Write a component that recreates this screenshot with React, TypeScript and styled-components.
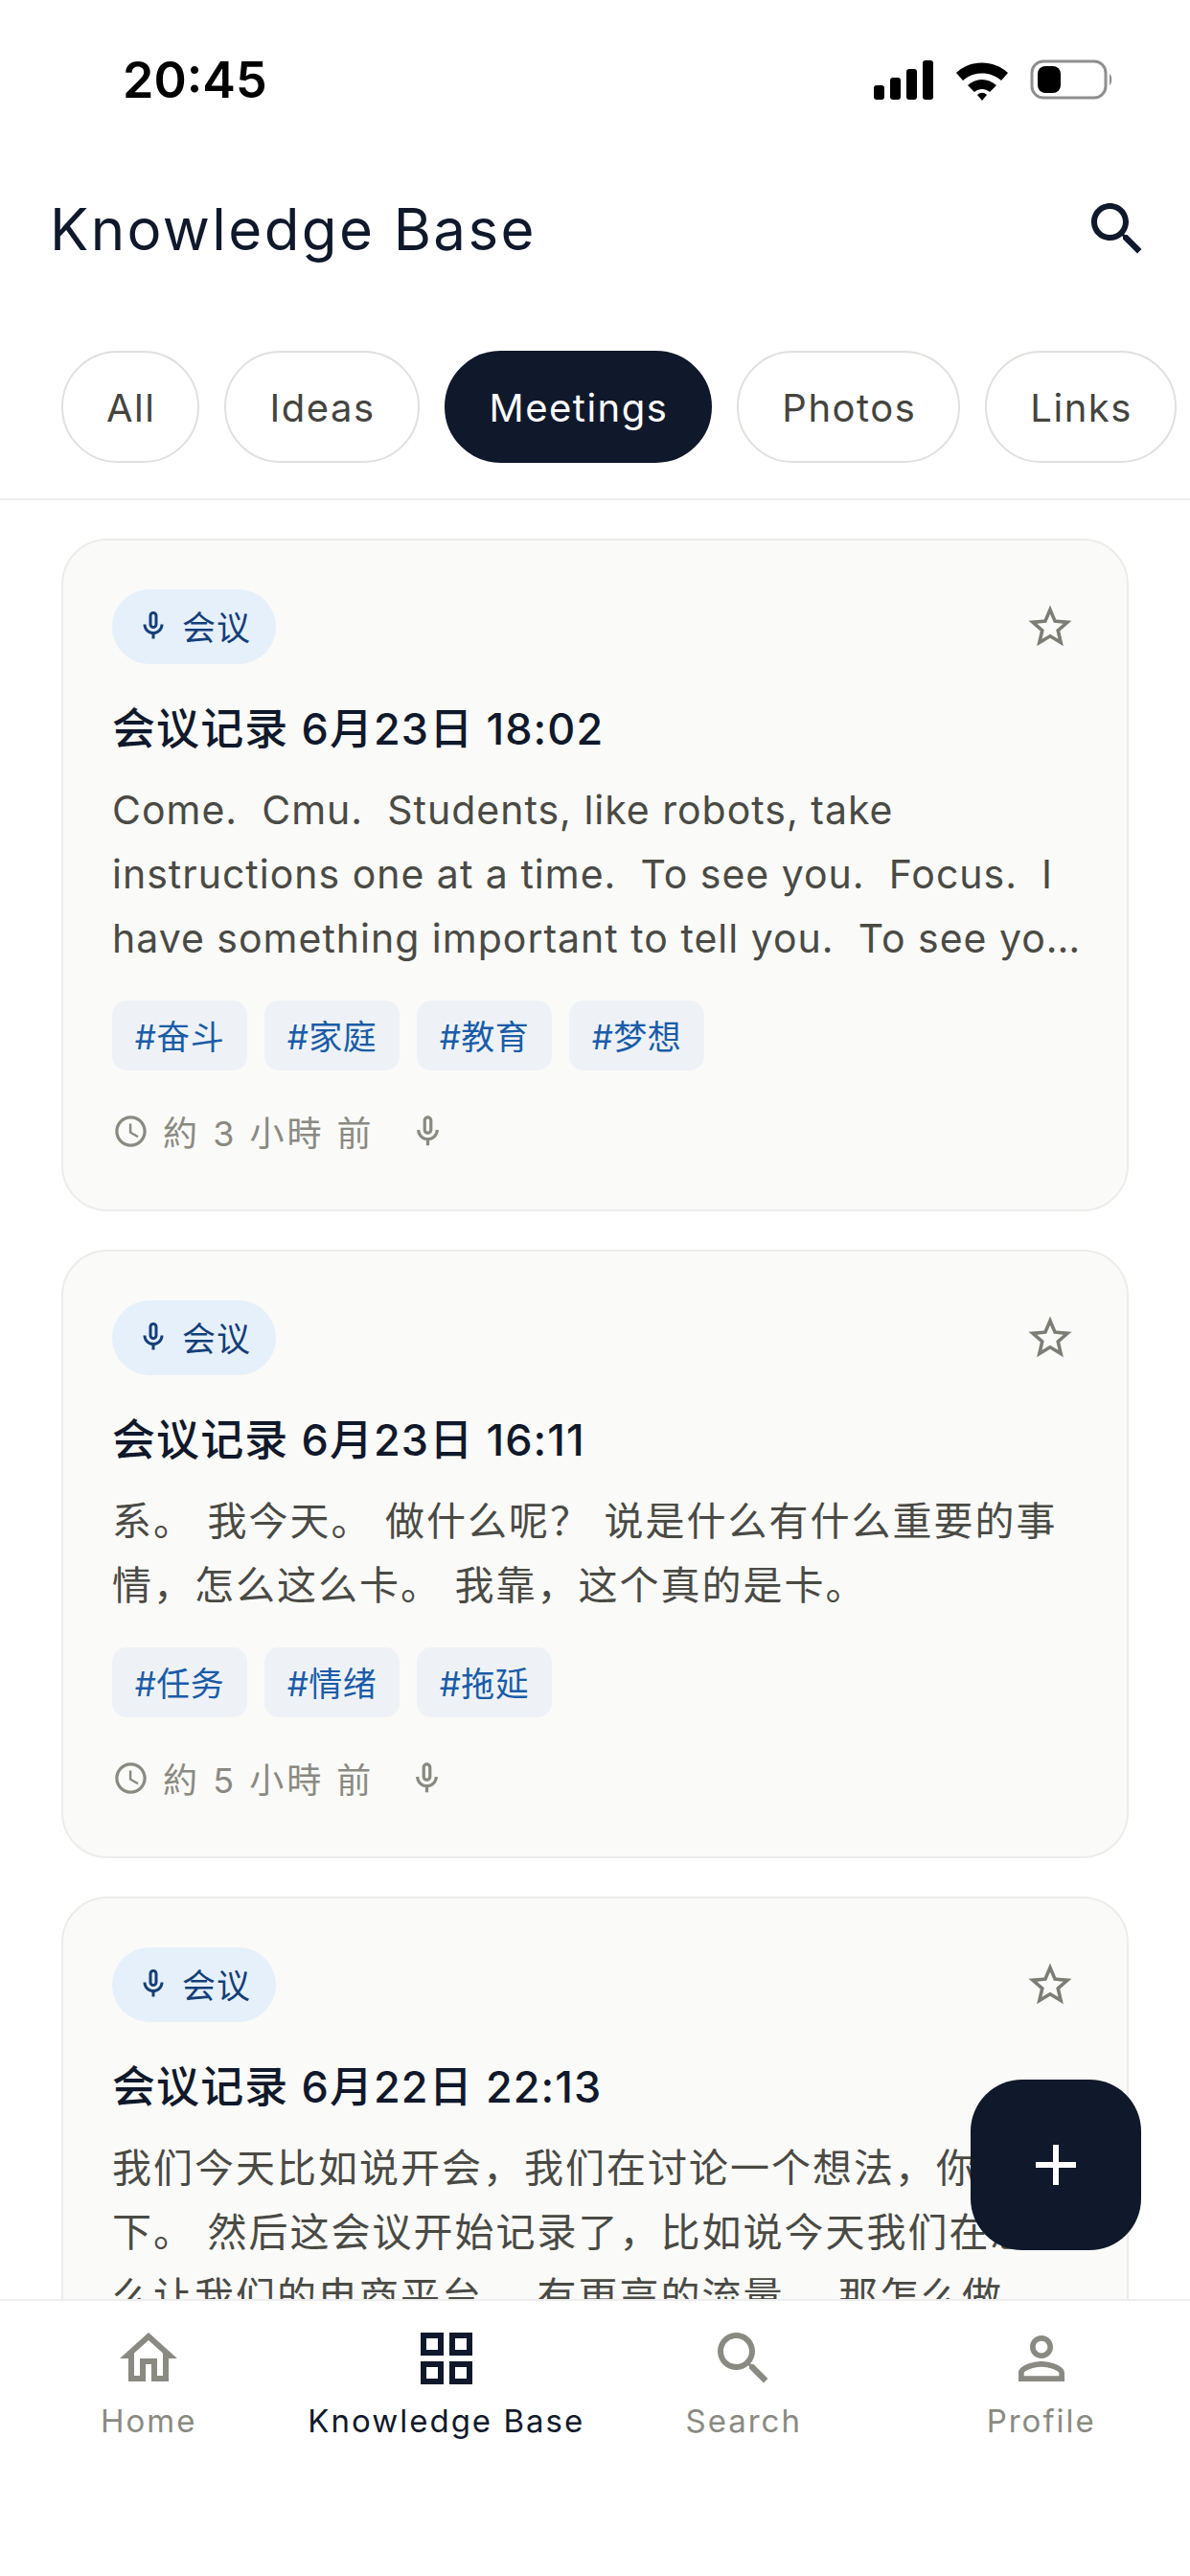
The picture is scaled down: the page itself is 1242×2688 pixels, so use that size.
import React from "react";
import styled, { createGlobalStyle } from "styled-components";

const FONT = `Inter, "Noto Sans CJK SC", sans-serif`;
const INK = "#10192b";
const MUTED = "#8a8a82";

const P = {
  home: "M12 5.69l5 4.5V18h-2v-6H9v6H7v-7.81l5-4.5M12 3L2 12h3v8h6v-6h2v6h6v-8h3L12 3z",
  search: "M15.5 14h-.79l-.28-.27C15.41 12.59 16 11.11 16 9.5 16 5.91 13.09 3 9.5 3S3 5.91 3 9.5 5.91 16 9.5 16c1.61 0 3.09-.59 4.23-1.57l.27.28v.79l5 4.99L20.49 19l-4.99-5zm-6 0C7.01 14 5 11.99 5 9.5S7.01 5 9.5 5 14 7.01 14 9.5 11.99 14 9.5 14z",
  grid: "M3 3v8h8V3H3zm6 6H5V5h4v4zm-6 4v8h8v-8H3zm6 6H5v-4h4v4zm4-16v8h8V3h-8zm6 6h-4V5h4v4zm-6 4v8h8v-8h-8zm6 6h-4v-4h4v4z",
  person: "M12 5.9c1.16 0 2.1.94 2.1 2.1s-.94 2.1-2.1 2.1S9.9 9.16 9.9 8s.94-2.1 2.1-2.1m0 9c2.97 0 6.1 1.46 6.1 2.1v1.1H5.9V17c0-.64 3.13-2.1 6.1-2.1M12 4C9.79 4 8 5.79 8 8s1.79 4 4 4 4-1.79 4-4-1.79-4-4-4zm0 9c-2.67 0-8 1.34-8 4v3h16v-3c0-2.66-5.33-4-8-4z",
  mic: "M12 14c1.66 0 3-1.34 3-3V5c0-1.66-1.34-3-3-3S9 3.34 9 5v6c0 1.66 1.34 3 3 3zm-1-9c0-.55.45-1 1-1s1 .45 1 1v6c0 .55-.45 1-1 1s-1-.45-1-1V5zm6 6c0 2.76-2.24 5-5 5s-5-2.24-5-5H5c0 3.53 2.61 6.43 6 6.92V21h2v-3.08c3.39-.49 6-3.39 6-6.92h-2z",
  star: "M22 9.24l-7.19-.62L12 2 9.19 8.63 2 9.24l5.46 4.73L5.82 21 12 17.27 18.18 21l-1.63-7.03L22 9.24zM12 15.4l-3.76 2.27 1-4.28-3.32-2.88 4.38-.38L12 6.1l1.71 4.04 4.38.38-3.32 2.88 1 4.28L12 15.4z",
  clock: "M11.99 2C6.47 2 2 6.48 2 12s4.47 10 9.99 10C17.52 22 22 17.52 22 12S17.52 2 11.99 2zM12 20c-4.42 0-8-3.58-8-8s3.58-8 8-8 8 3.58 8 8-3.58 8-8 8zm.5-13H11v6l5.25 3.15.75-1.23-4.5-2.67z",
  add: "M19 13h-6v6h-2v-6H5v-2h6V5h2v6h6v2z",
};

const Global = createGlobalStyle`
  html, body { margin: 0; padding: 0; background: #fff; }
  * { box-sizing: border-box; }
`;

const Screen = styled.div`
  position: relative;
  width: 1242px;
  height: 2688px;
  display: flex;
  flex-direction: column;
  overflow: hidden;
  background: #fff;
  font-family: ${FONT};
`;

const StatusBar = styled.div`
  height: 160px;
  flex: none;
  display: flex;
  align-items: center;
  justify-content: space-between;
  padding: 6px 0 0 128px;
`;

const Clock = styled.span`
  font-family: Inter, sans-serif;
  font-size: 52px;
  font-weight: 600;
  color: #000;
`;

const StatusIcons = styled.svg`
  width: 252px;
  height: 46px;
  margin-right: 78px;
  display: block;
`;

const Header = styled.header`
  height: 160px;
  flex: none;
  display: flex;
  align-items: center;
  justify-content: space-between;
  padding: 0 40px 2px 52px;
`;

const Title = styled.h1`
  margin: 0;
  font-size: 60px;
  font-weight: 400;
  letter-spacing: 2.4px;
  color: ${INK};
`;

const Chips = styled.nav`
  flex: none;
  height: 202px;
  padding: 46px 0 39px 64px;
  display: flex;
  gap: 26px;
  overflow: hidden;
  border-bottom: 2px solid #eeeeee;
`;

const Chip = styled.div<{ $active?: boolean }>`
  flex: none;
  height: 117px;
  padding: 2px 44px 0 45px;
  display: flex;
  align-items: center;
  border-radius: 59px;
  border: 2px solid ${(p) => (p.$active ? INK : "#e0e0de")};
  background: ${(p) => (p.$active ? INK : "#fff")};
  color: ${(p) => (p.$active ? "#fff" : "#44443f")};
  font-size: 40px;
  letter-spacing: 1.5px;
`;

const List = styled.main`
  flex: 1;
  min-height: 0;
  overflow: hidden;
  padding: 40px 64px 0;
  display: flex;
  flex-direction: column;
  gap: 40px;
`;

const Card = styled.article`
  flex: none;
  position: relative;
  padding: 51px 51px 54px;
  border: 2px solid #ececea;
  border-radius: 48px;
  background: #fafaf8;
`;

const CardTop = styled.div`
  display: flex;
  align-items: center;
  justify-content: space-between;
`;

const TypePill = styled.div`
  height: 78px;
  padding: 0 26px 3px 25px;
  display: flex;
  align-items: center;
  gap: 12px;
  border-radius: 39px;
  background: #e6f0fb;
  color: #143f78;
  font-size: 35px;
  letter-spacing: 1px;
`;

const Star = styled.svg`
  width: 54px;
  height: 54px;
  margin-right: 2px;
  fill: #7d7d76;
  display: block;
`;

const CardTitle = styled.h2`
  margin: 38px 0 21px;
  height: 60px;
  line-height: 60px;
  font-size: 45px;
  font-weight: 500;
  letter-spacing: 1.1px;
  color: ${INK};
`;

const Body = styled.p<{ $latin?: boolean }>`
  margin: 0 ${(p) => (p.$latin ? -18 : 0)}px 0 0;
  font-size: 41px;
  line-height: 67px;
  letter-spacing: ${(p) => (p.$latin ? 1 : 2)}px;
  color: #4a4a45;
  white-space: pre-wrap;
  display: -webkit-box;
  -webkit-box-orient: vertical;
  -webkit-line-clamp: 3;
  overflow: hidden;
`;

const Tags = styled.div`
  margin-top: 31px;
  display: flex;
  gap: 18px;
`;

const Tag = styled.span`
  height: 73px;
  width: 141px;
  padding-bottom: 3px;
  display: flex;
  align-items: center;
  justify-content: center;
  border-radius: 15px;
  background: #eef2f6;
  color: #1a5ca8;
  font-size: 35px;
  letter-spacing: 0.5px;
`;

const Meta = styled.div`
  margin-top: 35px;
  height: 56px;
  display: flex;
  align-items: center;
  color: ${MUTED};
  font-size: 36px;
  letter-spacing: 3px;
`;

const MetaIcon = styled.svg<{ $gap?: number }>`
  width: 39px;
  height: 39px;
  flex: none;
  fill: ${MUTED};
  margin-right: ${(p) => p.$gap ?? 0}px;
`;

const MetaText = styled.span`
  margin-right: 36px;
  white-space: pre;
`;

const MicIcon = styled.svg`
  width: 36px;
  height: 36px;
  flex: none;
  fill: currentColor;
`;

const Fab = styled.button`
  position: absolute;
  left: 1013px;
  top: 2170px;
  width: 178px;
  height: 178px;
  padding: 0;
  border: 0;
  border-radius: 54px;
  background: ${INK};
  display: flex;
  align-items: center;
  justify-content: center;
`;

const BottomNav = styled.footer`
  flex: none;
  height: 289px;
  padding-top: 24px;
  display: grid;
  grid-template-columns: repeat(4, 1fr);
  align-content: start;
  background: #fff;
  border-top: 2px solid #eeeeee;
  position: relative;
`;

const NavItem = styled.div<{ $active?: boolean }>`
  display: flex;
  flex-direction: column;
  align-items: center;
  gap: 5px;
  color: ${(p) => (p.$active ? INK : MUTED)};
  font-size: 33px;
  letter-spacing: 2px;
  line-height: 48px;
`;

const Icon = ({ d, size, color }: { d: string; size: number; color: string }) => (
  <svg width={size} height={size} viewBox="0 0 24 24" fill={color}>
    <path d={d} />
  </svg>
);

interface Note {
  title: string;
  body: string;
  latin?: boolean;
  tags: string[];
  ago: string;
}

const notes: Note[] = [
  {
    title: "会议记录 6月23日 18:02",
    body: "Come.  Cmu.  Students, like robots, take instructions one at a time.  To see you.  Focus.  I have something important to tell you.  To see you.  Focus.  Come on now.",
    latin: true,
    tags: ["#奋斗", "#家庭", "#教育", "#梦想"],
    ago: "約 3 小時 前",
  },
  {
    title: "会议记录 6月23日 16:11",
    body: "系。 我今天。 做什么呢？ 说是什么有什么重要的事情，怎么这么卡。 我靠，这个真的是卡。",
    tags: ["#任务", "#情绪", "#拖延"],
    ago: "約 5 小時 前",
  },
  {
    title: "会议记录 6月22日 22:13",
    body: "我们今天比如说开会，我们在讨论一个想法，你等一下。 然后这会议开始记录了，比如说今天我们在想怎么让我们的电商平台， 有更高的流量。 那怎么做呢，我们今天就来讨论一下。",
    tags: ["#会议", "#电商", "#流量"],
    ago: "約 22 小時 前",
  },
];

const chips = ["All", "Ideas", "Meetings", "Photos", "Links"];

const navItems = [
  { label: "Home", d: P.home },
  { label: "Knowledge Base", d: P.grid, active: true },
  { label: "Search", d: P.search },
  { label: "Profile", d: P.person },
];

export default function App() {
  return (
    <Screen>
      <Global />
      <StatusBar>
        <Clock>20:45</Clock>
        <StatusIcons viewBox="0 0 252 46">
          <rect x="0" y="29" width="11" height="15" rx="3" />
          <rect x="17" y="21" width="11" height="23" rx="3" />
          <rect x="34" y="12" width="11" height="32" rx="3" />
          <rect x="51" y="3" width="11" height="41" rx="3" />
          <path d="M86 16 C101 2 125 2 140 16 L133 24 C122 14 104 14 93 24 Z" />
          <path d="M98 29 C107 21 119 21 128 29 L121 36 C116 32 110 32 105 36 Z" />
          <path d="M108 39 C111 36 115 36 118 39 L113 45 Z" />
          <rect x="165" y="4" width="77" height="38" rx="12" fill="#fff" stroke="#8f8f8f" strokeWidth="3" />
          <rect x="171" y="9" width="24" height="28" rx="8" fill="#000" />
          <path d="M246 17 C249 19 249 27 246 29 Z" fill="#8f8f8f" />
        </StatusIcons>
      </StatusBar>
      <Header>
        <Title>Knowledge Base</Title>
        <Icon d={P.search} size={72} color={INK} />
      </Header>
      <Chips>
        {chips.map((c) => (
          <Chip key={c} $active={c === "Meetings"}>{c}</Chip>
        ))}
      </Chips>
      <List>
        {notes.map((n) => (
          <Card key={n.title}>
            <CardTop>
              <TypePill>
                <MicIcon viewBox="0 0 24 24"><path d={P.mic} /></MicIcon>
                会议
              </TypePill>
              <Star viewBox="0 0 24 24"><path d={P.star} /></Star>
            </CardTop>
            <CardTitle>{n.title}</CardTitle>
            <Body $latin={n.latin}>{n.body}</Body>
            <Tags>
              {n.tags.map((t) => (
                <Tag key={t}>{t}</Tag>
              ))}
            </Tags>
            <Meta>
              <MetaIcon viewBox="0 0 24 24" $gap={14}><path d={P.clock} /></MetaIcon>
              <MetaText>{n.ago}</MetaText>
              <MetaIcon viewBox="0 0 24 24"><path d={P.mic} /></MetaIcon>
            </Meta>
          </Card>
        ))}
      </List>
      <BottomNav>
        {navItems.map((it) => (
          <NavItem key={it.label} $active={it.active}>
            <Icon d={it.d} size={72} color={it.active ? INK : MUTED} />
            {it.label}
          </NavItem>
        ))}
      </BottomNav>
      <Fab aria-label="Add">
        <Icon d={P.add} size={72} color="#fff" />
      </Fab>
    </Screen>
  );
}
